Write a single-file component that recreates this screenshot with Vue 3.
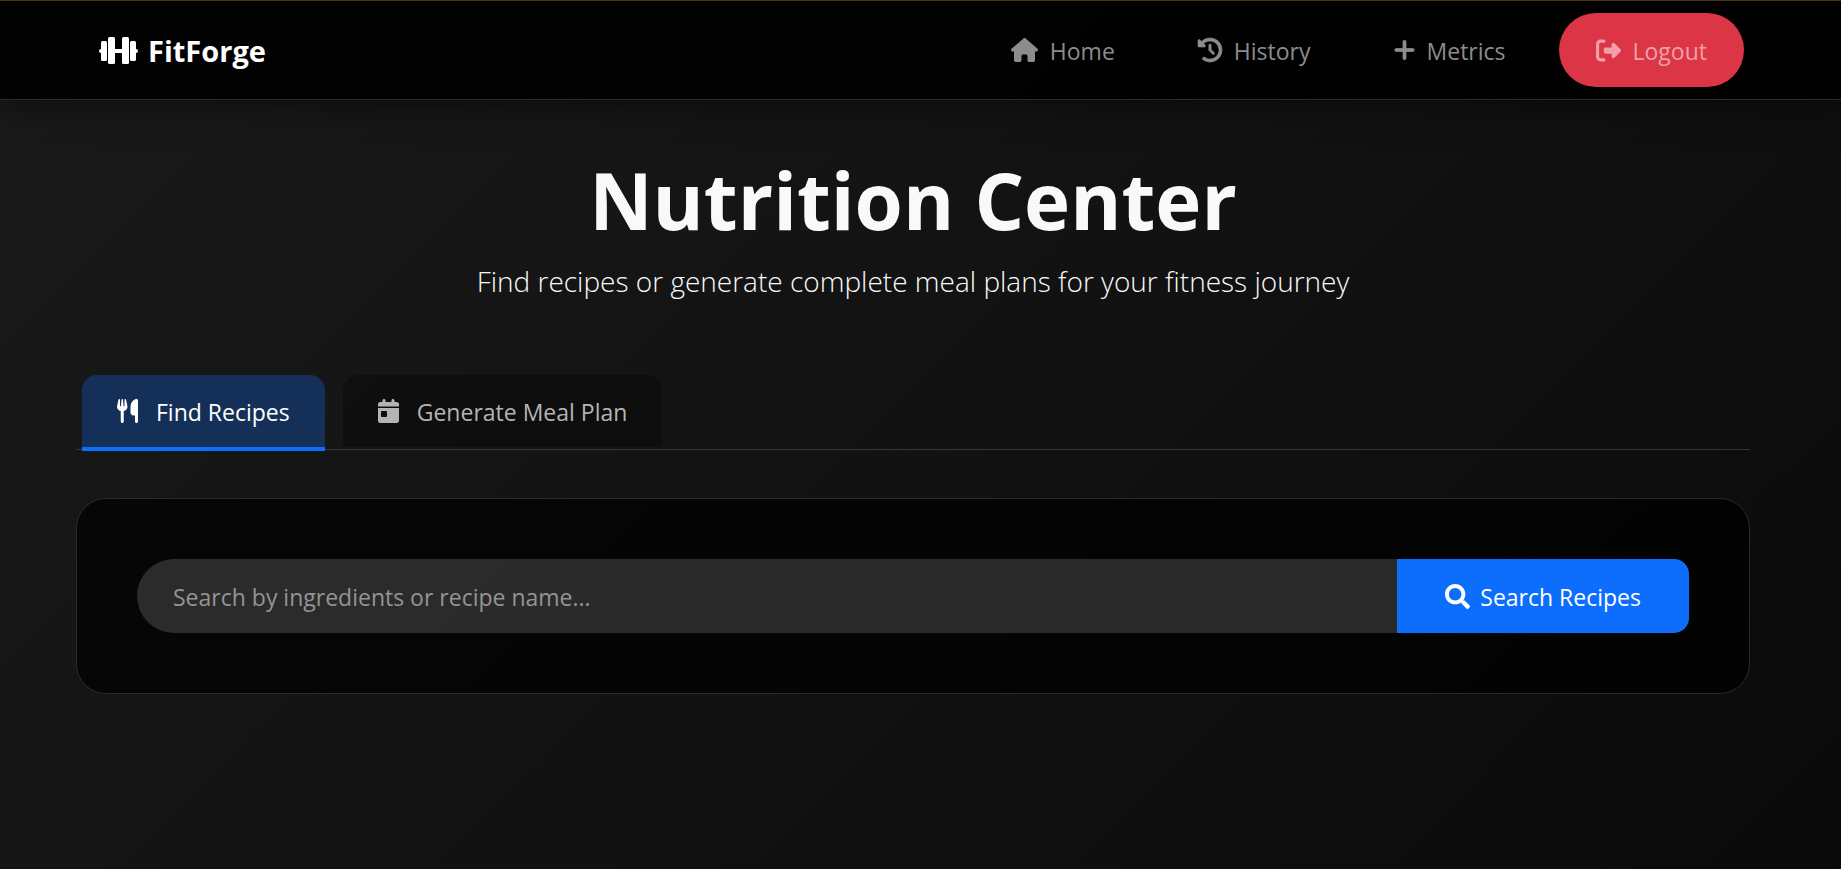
<script setup>
import { ref } from 'vue'

const icons = {
  home: {
    width: 576,
    path: 'M575.8 255.5c0 18-15 32.1-32 32.1h-32l.7 160.2c0 2.7-.2 5.4-.5 8.1V472c0 22.1-17.9 40-40 40H456c-1.1 0-2.2 0-3.3-.1c-1.4 .1-2.8 .1-4.2 .1H416 392c-22.1 0-40-17.9-40-40V448 384c0-17.7-14.3-32-32-32H256c-17.7 0-32 14.3-32 32v64 24c0 22.1-17.9 40-40 40H160 128.1c-1.5 0-3-.1-4.5-.2c-1.2 .1-2.4 .2-3.6 .2H104c-22.1 0-40-17.9-40-40V360c0-.9 0-1.9 .1-2.8V287.6H32c-18 0-32-14-32-32.1c0-9 3-17 10-24L266.4 8c7-7 15-8 22-8s15 2 21 7L564.8 231.5c8 7 12 15 11 24z',
  },
  history: {
    width: 512,
    stroke: 14,
    path: 'M75 75L41 41C25.9 25.9 0 36.6 0 57.9V168c0 13.3 10.7 24 24 24H134.1c21.4 0 32.1-25.9 17-41l-30.8-30.8C155 85.5 203 64 256 64c106 0 192 86 192 192s-86 192-192 192c-40.8 0-78.6-12.7-109.7-34.4c-14.5-10.1-34.4-6.6-44.6 7.9s-6.6 34.4 7.9 44.6C151.2 495 201.7 512 256 512c141.4 0 256-114.6 256-256S397.4 0 256 0C185.3 0 121.3 28.7 75 75zm181 53c-13.3 0-24 10.7-24 24V256c0 6.4 2.5 12.5 7 17l72 72c9.4 9.4 24.6 9.4 33.9 0s9.4-24.6 0-33.9l-65-65V152c0-13.3-10.7-24-24-24z',
  },
  plus: {
    width: 448,
    stroke: 16,
    path: 'M256 80c0-17.7-14.3-32-32-32s-32 14.3-32 32V224H48c-17.7 0-32 14.3-32 32s14.3 32 32 32H192V432c0 17.7 14.3 32 32 32s32-14.3 32-32V288H400c17.7 0 32-14.3 32-32s-14.3-32-32-32H256V80z',
  },
  logout: {
    width: 512,
    path: 'M377.9 105.9L500.7 228.7c7.2 7.2 11.3 17.1 11.3 27.3s-4.1 20.1-11.3 27.3L377.9 406.1c-6.4 6.4-15 9.9-24 9.9c-18.7 0-33.9-15.2-33.9-33.9l0-62.1-128 0c-17.7 0-32-14.3-32-32l0-64c0-17.7 14.3-32 32-32l128 0 0-62.1c0-18.7 15.2-33.9 33.9-33.9c9 0 17.6 3.6 24 9.9zM160 96L96 96c-17.7 0-32 14.3-32 32l0 256c0 17.7 14.3 32 32 32l64 0c17.7 0 32 14.3 32 32s-14.3 32-32 32l-64 0c-53 0-96-43-96-96L0 128C0 75 43 32 96 32l64 0c17.7 0 32 14.3 32 32s-14.3 32-32 32z',
  },
  utensils: {
    width: 448,
    path: 'M416 0C400 0 288 32 288 176V288c0 35.3 28.7 64 64 64h32V480c0 17.7 14.3 32 32 32s32-14.3 32-32V352 240 32c0-17.7-14.3-32-32-32zM64 16C64 7.8 57.9 1 49.7 .1S34.2 4.6 32.4 12.5L2.1 148.8C.7 155.1 0 161.5 0 167.9c0 45.9 35.1 83.6 80 87.7V480c0 17.7 14.3 32 32 32s32-14.3 32-32V255.6c44.9-4.1 80-41.8 80-87.7c0-6.4-.7-12.8-2.1-19.1L191.6 12.5c-1.8-8-9.3-13.3-17.4-12.4S160 7.8 160 16V150.2c0 5.4-4.4 9.8-9.8 9.8c-5.1 0-9.3-3.9-9.8-9L127.9 14.6C127.2 6.3 120.3 0 112 0s-15.2 6.3-15.9 14.6L83.7 151c-.5 5.1-4.7 9-9.8 9c-5.4 0-9.8-4.4-9.8-9.8V16z',
  },
  calendar: {
    width: 448,
    path: 'M128 0c17.7 0 32 14.3 32 32V64H288V32c0-17.7 14.3-32 32-32s32 14.3 32 32V64h48c26.5 0 48 21.5 48 48v48H0V112C0 85.5 21.5 64 48 64H96V32c0-17.7 14.3-32 32-32zM0 192H448V464c0 26.5-21.5 48-48 48H48c-26.5 0-48-21.5-48-48V192zm80 64c-8.8 0-16 7.2-16 16v96c0 8.8 7.2 16 16 16h96c8.8 0 16-7.2 16-16V272c0-8.8-7.2-16-16-16H80z',
  },
  search: {
    width: 512,
    path: 'M505 442.7L405.3 343c-4.5-4.5-10.6-7-17-7H372c27.6-35.3 44-79.7 44-128C416 93.1 322.9 0 208 0S0 93.1 0 208s93.1 208 208 208c48.3 0 92.7-16.4 128-44v16.3c0 6.4 2.5 12.5 7 17l99.7 99.7c9.4 9.4 24.6 9.4 33.9 0l28.3-28.3c9.4-9.4 9.4-24.6.1-34zM208 336c-70.7 0-128-57.2-128-128 0-70.7 57.2-128 128-128 70.7 0 128 57.2 128 128 0 70.7-57.2 128-128 128z',
  },
}

const links = [
  { label: 'Home', icon: icons.home },
  { label: 'History', icon: icons.history },
  { label: 'Metrics', icon: icons.plus },
]

const tabs = [
  { id: 'recipes', label: 'Find Recipes', icon: icons.utensils },
  { id: 'plan', label: 'Generate Meal Plan', icon: icons.calendar },
]
const activeTab = ref('recipes')
const query = ref('')
</script>

<template>
  <div class="page">
    <header class="navbar">
      <a class="brand" href="#">
        <svg class="brand-icon" viewBox="0 0 39 27" aria-hidden="true">
          <rect x="0" y="12" width="4" height="4" rx="2" />
          <rect x="35" y="12" width="4" height="4" rx="2" />
          <rect x="2" y="4" width="6" height="20" rx="1.5" />
          <rect x="31" y="4" width="6" height="20" rx="1.5" />
          <rect x="9" y="0" width="7" height="27" rx="1.5" />
          <rect x="23" y="0" width="7" height="27" rx="1.5" />
          <rect x="15" y="12" width="9" height="4" />
        </svg>
        <span>FitForge</span>
      </a>
      <nav class="nav-links" aria-label="Main">
        <a v-for="link in links" :key="link.label" class="nav-link" href="#">
          <svg class="icon" :viewBox="`0 0 ${link.icon.width} 512`" aria-hidden="true">
            <path :d="link.icon.path" stroke="currentColor" :stroke-width="link.icon.stroke || 0" />
          </svg>
          <span>{{ link.label }}</span>
        </a>
        <a class="nav-link logout" href="#">
          <svg class="icon" viewBox="0 0 512 512" aria-hidden="true">
            <path :d="icons.logout.path" />
          </svg>
          <span>Logout</span>
        </a>
      </nav>
    </header>

    <main class="content">
      <div class="hero">
        <h1>Nutrition Center</h1>
        <p>Find recipes or generate complete meal plans for your fitness journey</p>
      </div>

      <div class="tabs" role="tablist">
        <button
          v-for="tab in tabs"
          :key="tab.id"
          class="tab"
          :class="{ active: activeTab === tab.id }"
          type="button"
          role="tab"
          :aria-selected="activeTab === tab.id"
          @click="activeTab = tab.id"
        >
          <svg class="icon" :viewBox="`0 0 ${tab.icon.width} 512`" aria-hidden="true">
            <path :d="tab.icon.path" />
          </svg>
          <span>{{ tab.label }}</span>
        </button>
      </div>

      <section class="card">
        <form class="search" @submit.prevent>
          <input
            v-model="query"
            type="text"
            aria-label="Search recipes"
            placeholder="Search by ingredients or recipe name..."
          />
          <button type="submit">
            <svg class="icon" viewBox="0 0 512 512" aria-hidden="true">
              <path :d="icons.search.path" />
            </svg>
            <span>Search Recipes</span>
          </button>
        </form>
      </section>
    </main>
  </div>
</template>

<style>
body {
  margin: 0;
  background: #111;
}
</style>

<style scoped>
.page {
  box-sizing: border-box;
  min-height: 100vh;
  background: linear-gradient(135deg, #1a1a1a 0%, #0a0a0a 100%);
  color: #f8f9fa;
  font-family: "Segoe UI", "Open Sans", "Noto Sans", sans-serif;
  font-size: 23px;
  line-height: 36px;
}

.icon {
  height: 24px;
  flex: none;
  overflow: visible;
  fill: currentColor;
}

.icon + span {
  padding-top: 1px;
}

.navbar {
  display: flex;
  align-items: center;
  justify-content: space-between;
  box-sizing: border-box;
  height: 100px;
  padding: 0 97px 0 99px;
  border-top: 1px solid #4a3418;
  border-bottom: 1px solid #2b2b2b;
  background: rgba(0, 0, 0, 0.9);
  box-shadow: 0 4px 30px rgba(0, 0, 0, 0.5);
}

.brand {
  display: flex;
  align-items: center;
  gap: 10px;
  color: #fff;
  font-size: 29px;
  font-weight: 700;
  text-decoration: none;
}

.brand span {
  padding-top: 2px;
}

.brand-icon {
  width: 39px;
  height: 27px;
  fill: currentColor;
}

.nav-links {
  display: flex;
  align-items: center;
}

.nav-link {
  display: flex;
  align-items: center;
  gap: 12px;
  margin-right: 83px;
  color: #8c8c8c;
  text-decoration: none;
}

.nav-link:nth-last-child(2) {
  margin-right: 53px;
}

.logout {
  box-sizing: border-box;
  height: 74px;
  margin-right: 0;
  padding: 0 37px;
  border-radius: 37px;
  background: #dc3545;
  color: #f1a0a8;
}

.logout .icon,
.search .icon {
  height: 25px;
}

.content {
  padding: 50px 91px 60px 76px;
}

.hero {
  text-align: center;
}

.hero h1 {
  margin: 0 0 9px;
  font-size: 78px;
  font-weight: 700;
  line-height: 100px;
}

.hero p {
  margin: 0;
  font-size: 28px;
  font-weight: 300;
  line-height: 44px;
}

.tabs {
  display: flex;
  align-items: flex-start;
  gap: 18px;
  margin-top: 72px;
  padding: 0 6px;
  border-bottom: 1px solid #363636;
}

.tab {
  display: flex;
  align-items: center;
  gap: 18px;
  height: 72px;
  margin: 0;
  padding: 0 35px;
  border: 0;
  border-radius: 15px 15px 0 0;
  background: rgba(0, 0, 0, 0.3);
  color: #b4b4b4;
  font: inherit;
  cursor: pointer;
}

.tab.active {
  box-sizing: border-box;
  height: 76px;
  margin-bottom: -2px;
  border-bottom: 4px solid #0d6efd;
  background: #143059;
  color: #fff;
}

.card {
  margin-top: 48px;
  padding: 60px;
  border: 1px solid #2a2a2a;
  border-radius: 30px;
  background: rgba(0, 0, 0, 0.7);
}

.search {
  display: flex;
}

.search input {
  box-sizing: border-box;
  flex: 1;
  min-width: 0;
  height: 74px;
  padding: 2px 36px 0;
  border: 0;
  border-radius: 37px 0 0 37px;
  outline: 0;
  background: rgba(255, 255, 255, 0.15);
  color: #fff;
  font: inherit;
}

.search input::placeholder {
  color: #949494;
  opacity: 1;
}

.search button {
  display: flex;
  align-items: center;
  justify-content: center;
  gap: 10px;
  height: 74px;
  padding: 0 48px;
  border: 0;
  border-radius: 0 15px 15px 0;
  background: #0d6efd;
  color: #fff;
  font: inherit;
  cursor: pointer;
}
</style>
